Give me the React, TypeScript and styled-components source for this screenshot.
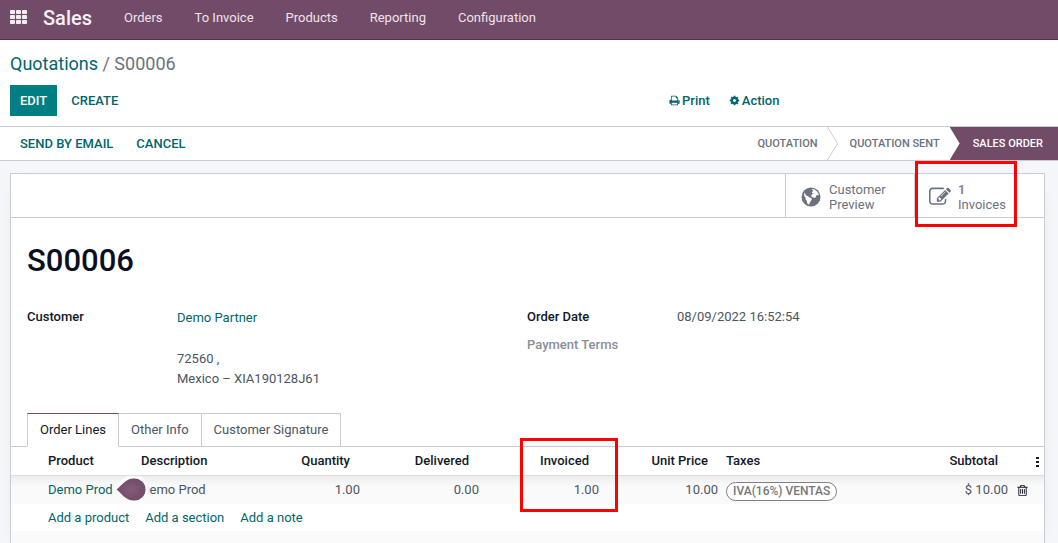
import React from "react";
import styled, { createGlobalStyle, css } from "styled-components";

const color = {
  brand: "#714b67",
  teal: "#017e84",
  tealText: "#01666b",
  line: "#c9ccd2",
  ink: "#111827",
  text: "#4b5563",
  muted: "#6b7280",
};

const GlobalStyle = createGlobalStyle`
  *, *::before, *::after { box-sizing: border-box; }
  body {
    margin: 0;
    background: #fff;
    color: ${color.text};
    font-family: Roboto, "Liberation Sans", sans-serif;
    font-size: 13px;
    line-height: 20px;
    overflow: hidden;
  }
  button { font: inherit; color: inherit; background: none; border: 0; padding: 0; cursor: pointer; }
  a { color: ${color.tealText}; text-decoration: none; }
  h1, p, dl, dd, dt, ol { margin: 0; padding: 0; }
`;

const Page = styled.div`
  display: flex;
  flex-direction: column;
  height: 100vh;
`;

const Navbar = styled.nav`
  display: flex;
  align-items: center;
  height: 40px;
  padding: 0 10px 4px;
  background: ${color.brand};
  border-bottom: 1px solid #4f3448;
  color: #f0e9ee;
  flex: none;
`;

const AppsButton = styled.button`
  display: flex;
  margin-right: 16px;
  padding-bottom: 2px;
`;

const Brand = styled.a`
  color: #f5f0f4;
  font-size: 20px;
  font-weight: 500;
  margin-right: 16px;
`;

const NavLink = styled.a`
  color: #eee4eb;
  padding: 0 16px;
`;

const ControlPanel = styled.header`
  display: flex;
  flex-direction: column;
  gap: 9px;
  padding: 12px 10px 10px;
  border-bottom: 1px solid ${color.line};
  flex: none;
`;

const Breadcrumb = styled.div`
  font-size: 18px;
  line-height: 24px;
  color: ${color.muted};
`;

const Actions = styled.div`
  display: grid;
  grid-template-columns: 659px 1fr;
  align-items: center;
`;

const ButtonGroup = styled.div<{ $gap?: number }>`
  display: flex;
  align-items: center;
  gap: ${(p) => p.$gap ?? 0}px;
`;

const Button = styled.button<{ $primary?: boolean }>`
  height: 31px;
  padding: 0 ${(p) => (p.$primary ? 10 : 14)}px;
  font-weight: 500;
  text-transform: uppercase;
  color: ${(p) => (p.$primary ? "#fff" : color.tealText)};
  background: ${(p) => (p.$primary ? color.teal : "transparent")};
`;

const MenuButton = styled.button`
  display: flex;
  align-items: center;
  gap: 2px;
  font-weight: 500;
  color: ${color.tealText};
`;

const StatusBar = styled.div`
  display: flex;
  justify-content: space-between;
  height: 34px;
  padding-left: 20px;
  border-bottom: 1px solid ${color.line};
  flex: none;
`;

const TextButton = styled.button`
  font-weight: 500;
  text-transform: uppercase;
  color: ${color.tealText};
`;

const Steps = styled.ol`
  display: flex;
  list-style: none;
  font-size: 11px;
  font-weight: 500;
  text-transform: uppercase;
  color: ${color.muted};
`;

const Step = styled.li<{ $active?: boolean }>`
  display: flex;
  align-items: center;
  ${(p) =>
    p.$active
      ? css`
          padding: 0 15px 0 23px;
          margin-left: 10px;
          background: ${color.brand};
          color: #fff;
          clip-path: polygon(0 0, 100% 0, 100% 100%, 0 100%, 10px 50%);
        `
      : css`
          padding-left: 12px;
        `}
`;

const StepArrow = styled.svg`
  margin-left: 9px;
  align-self: stretch;
  width: 11px;
  height: 33px;
`;

const Main = styled.main`
  display: flex;
  flex: 1;
  min-height: 0;
  padding: 12px 13px 0 10px;
  background: #f4f6fa;
`;

const Sheet = styled.section`
  flex: 1;
  min-width: 0;
  background: #fff;
  border: 1px solid ${color.line};
  border-bottom: 0;
  box-shadow: 0 5px 20px -15px rgba(0, 0, 0, 0.3);
`;

const StatButtons = styled.div`
  display: flex;
  justify-content: flex-end;
  height: 44px;
  border-bottom: 1px solid ${color.line};
`;

const StatButton = styled.button`
  position: relative;
  display: flex;
  align-items: center;
  gap: 7px;
  width: 130px;
  padding: 2px 13px 0 14px;
  border-left: 1px solid ${color.line};
  color: ${color.muted};
  text-align: left;
  line-height: 15px;

  &:first-child { width: 129px; }
`;

const StatIcon = styled.span`
  display: flex;
  justify-content: center;
  width: 22px;
`;

const StatValue = styled.span`
  display: block;
  font-weight: 500;
  color: #8f6f87;
`;

const Highlight = styled.span<{ $x: number; $y: number; $w: number; $h: number }>`
  position: absolute;
  z-index: 2;
  left: ${(p) => p.$x}px;
  top: ${(p) => p.$y}px;
  width: ${(p) => p.$w}px;
  height: ${(p) => p.$h}px;
  border: 3px solid #f00;
  pointer-events: none;
`;

const Title = styled.h1`
  padding: 23px 16px 0;
  font-size: 31px;
  line-height: 40px;
  font-weight: 500;
  color: #0b1020;
`;

const Fields = styled.div`
  display: grid;
  grid-template-columns: 500px 1fr;
  height: 106px;
  margin: 26px 16px 0;
`;

const FieldList = styled.dl`
  display: grid;
  grid-template-columns: 150px 1fr;
  align-content: start;
  row-gap: 8px;
`;

const Label = styled.dt<{ $empty?: boolean }>`
  font-weight: 500;
  color: ${(p) => (p.$empty ? "#8a8f98" : color.ink)};
`;

const Partner = styled.dd`
  padding-top: 1px;
`;

const Address = styled.p`
  padding-top: 21px;
`;

const Tabs = styled.div`
  display: flex;
  height: 34px;
  padding-left: 16px;
  box-shadow: inset 0 -1px ${color.line};
`;

const Tab = styled.button<{ $active?: boolean }>`
  padding: 0 12px;
  border: 1px solid ${color.line};
  border-left-width: ${(p) => (p.$active ? 1 : 0)}px;
  color: ${color.text};
  ${(p) =>
    p.$active &&
    css`
      color: ${color.ink};
      background: #fff;
      border-top-color: ${color.brand};
      border-bottom-color: #fff;
    `}
`;

const Table = styled.table`
  width: 100%;
  table-layout: fixed;
  border-collapse: separate;
  border-spacing: 0;
`;

const Col = styled.col<{ $w?: number }>`
  width: ${(p) => (p.$w ? `${p.$w}px` : "auto")};
`;

const HeadCell = styled.th<{ $right?: boolean }>`
  position: relative;
  height: 29px;
  padding: 0 ${(p) => (p.$right ? 14 : 4)}px 0 4px;
  border-bottom: 1px solid #dcdde1;
  font-weight: 500;
  color: ${color.ink};
  text-align: ${(p) => (p.$right ? "right" : "left")};
`;

const Row = styled.tr<{ $kind: "line" | "add" | "blank" }>`
  height: ${(p) => (p.$kind === "line" ? 28 : 27)}px;
  background: ${(p) =>
    p.$kind === "line"
      ? "linear-gradient(#ececec, #fafafa 10px)"
      : p.$kind === "blank"
        ? "#fafafa"
        : "#fff"};
`;

const Cell = styled.td<{ $right?: boolean }>`
  position: relative;
  padding: 0 4px;
  text-align: ${(p) => (p.$right ? "right" : "left")};
`;

const AddLinks = styled.div`
  display: flex;
  gap: 16px;
`;

const TaxRow = styled.div`
  display: flex;
  align-items: center;
`;

const Tag = styled.span`
  padding: 0 6px;
  border: 1px solid #808080;
  border-radius: 10px;
  background: #fff;
  color: #777;
  font-size: 12px;
  font-weight: 500;
  line-height: 17px;
  margin-top: 2px;
`;

const Drop = styled.svg`
  position: absolute;
  z-index: 1;
  left: -23px;
  top: 0;
`;

const RowIcon = styled.button<{ $end?: boolean }>`
  display: flex;
  margin-left: ${(p) => (p.$end ? "auto" : "0")};
  color: ${color.ink};
`;

const glyphs = {
  print:
    "M448 1536h896v-256h-896v256zm0-640h896v-384h-160q-40 0-68-28t-28-68v-160h-640v640zm1152 64q0-26-19-45t-45-19-45 19-19 45 19 45 45 19 45-19 19-45zm128 0v416q0 13-9.5 22.5t-22.5 9.5h-224v160q0 40-28 68t-68 28h-960q-40 0-68-28t-28-68v-160h-224q-13 0-22.5-9.5t-9.5-22.5v-416q0-79 56.5-135.5t135.5-56.5h64v-544q0-40 28-68t68-28h672q40 0 88 20t76 48l152 152q28 28 48 76t20 88v256h64q79 0 135.5 56.5t56.5 135.5z",
  cog: "M1152 896q0-106-75-181t-181-75-181 75-75 181 75 181 181 75 181-75 75-181zm512-109v222q0 12-8 23t-20 13l-185 28q-19 54-39 91 35 50 107 138 10 12 10 25t-9 23q-27 37-99 108t-94 71q-12 0-26-9l-138-108q-44 23-91 38-16 136-29 186-7 28-36 28h-222q-14 0-24.5-8.5t-11.5-21.5l-28-184q-49-16-90-37l-141 107q-10 9-25 9-14 0-25-11-126-114-165-168-7-10-7-23 0-12 8-23 15-21 51-66.5t54-70.5q-27-50-41-99l-183-27q-13-2-21-12.5t-8-23.5v-222q0-12 8-23t19-13l186-28q14-46 39-92-40-57-107-138-10-12-10-24 0-10 9-23 26-36 98.5-107.5t94.5-71.5q13 0 26 10l138 107q44-23 91-38 16-136 29-186 7-28 36-28h222q14 0 24.5 8.5t11.5 21.5l28 184q49 16 90 37l142-107q9-9 24-9 13 0 25 10 129 119 165 170 7 8 7 22 0 12-8 23-15 21-51 66.5t-54 70.5q26 50 41 98l183 28q13 2 21 12.5t8 23.5z",
  edit: "M888 1184l116-116-152-152-116 116v56h96v96h56zm440-720q-16-16-33 1l-350 350q-17 17-1 33t33-1l350-350q17-17 1-33zm80 594v190q0 119-84.5 203.5t-203.5 84.5h-832q-119 0-203.5-84.5t-84.5-203.5v-832q0-119 84.5-203.5t203.5-84.5h832q63 0 117 25 15 7 18 23 3 17-9 29l-49 49q-14 14-32 8-23-6-45-6h-832q-66 0-113 47t-47 113v832q0 66 47 113t113 47h832q66 0 113-47t47-113v-126q0-13 9-22l64-64q15-15 35-7t20 29zm-96-738l288 288-672 672h-288v-288zm444 132l-92 92-288-288 92-92q28-28 68-28t68 28l152 152q28 28 28 68t-28 68z",
  trash:
    "M704 736v576q0 14-9 23t-23 9h-64q-14 0-23-9t-9-23v-576q0-14 9-23t23-9h64q14 0 23 9t9 23zm256 0v576q0 14-9 23t-23 9h-64q-14 0-23-9t-9-23v-576q0-14 9-23t23-9h64q14 0 23 9t9 23zm256 0v576q0 14-9 23t-23 9h-64q-14 0-23-9t-9-23v-576q0-14 9-23t23-9h64q14 0 23 9t9 23zm128 724v-948h-896v948q0 22 7 40.5t14.5 27 10.5 8.5h832q3 0 10.5-8.5t14.5-27 7-40.5zm-672-1076h448l-48-117q-7-9-17-11h-317q-10 2-17 11zm928 32v64q0 14-9 23t-23 9h-96v948q0 83-47 143.5t-113 60.5h-832q-66 0-113-58.5t-47-141.5v-952h-96q-14 0-23-9t-9-23v-64q0-14 9-23t23-9h309l70-167q15-37 54-63t79-26h320q40 0 79 26t54 63l70 167h309q14 0 23 9t9 23z",
};

function Glyph({ name, size }: { name: keyof typeof glyphs; size: number }) {
  return (
    <svg width={size} height={size} viewBox="0 0 1792 1792" fill="currentColor" aria-hidden="true">
      <path d={glyphs[name]} />
    </svg>
  );
}

function AppsIcon() {
  return (
    <svg width="17" height="14" viewBox="0 0 17 14" fill="#f3edf1" aria-hidden="true">
      {[0, 5, 10].map((y) =>
        [0, 6, 12].map((x) => <rect key={`${x}-${y}`} x={x} y={y} width="5" height="4" rx="0.8" />),
      )}
    </svg>
  );
}

function GlobeIcon() {
  return (
    <svg width="20" height="20" viewBox="0 0 20 20" aria-hidden="true">
      <circle cx="10" cy="10" r="9.5" fill={color.muted} />
      <path
        fill="#fff"
        d="M11.2 2l2.4.6 2.2 1.6 1.5 2.1.7 2.2-.9-.5-1-.1-.9.9-.3 1.3-1.1.9-1.2-.5-1.4-.3-.9-1 .1-1.3 1.1-.9 1.1-.4-.5-.7-1 .3-.3-.9 1-1.1.8-.5-.9-.4-.7-.6zM3.2 6l1.1.5.4 1.4 1.1.9 1.4.5.9 1 1.5.4 1.2 1.1-.2 1.3-1 .8-.4 1.3-.9 1 .1 1.5-1.3-.5-1-1.3-.2-1.8-1-1.1-.5-1.4.3-1-1-.9-.6-1.6z"
      />
    </svg>
  );
}

export default function App() {
  return (
    <Page>
      <GlobalStyle />
      <Navbar>
        <AppsButton aria-label="Apps">
          <AppsIcon />
        </AppsButton>
        <Brand href="#">Sales</Brand>
        {["Orders", "To Invoice", "Products", "Reporting", "Configuration"].map((item) => (
          <NavLink key={item} href="#">
            {item}
          </NavLink>
        ))}
      </Navbar>

      <ControlPanel>
        <Breadcrumb>
          <a href="#">Quotations</a> / S00006
        </Breadcrumb>
        <Actions>
          <ButtonGroup>
            <Button $primary>Edit</Button>
            <Button>Create</Button>
          </ButtonGroup>
          <ButtonGroup $gap={19}>
            <MenuButton>
              <Glyph name="print" size={11} />
              Print
            </MenuButton>
            <MenuButton>
              <Glyph name="cog" size={11} />
              Action
            </MenuButton>
          </ButtonGroup>
        </Actions>
      </ControlPanel>

      <StatusBar>
        <ButtonGroup $gap={23}>
          <TextButton>Send by Email</TextButton>
          <TextButton>Cancel</TextButton>
        </ButtonGroup>
        <Steps>
          <Step>
            Quotation
            <StepArrow viewBox="0 0 11 33" aria-hidden="true">
              <path d="M0.5 0L10.5 16.5L0.5 33" fill="none" stroke="#c9ccd2" />
            </StepArrow>
          </Step>
          <Step>Quotation Sent</Step>
          <Step $active>Sales Order</Step>
        </Steps>
      </StatusBar>

      <Main>
        <Sheet>
          <StatButtons>
            <StatButton>
              <StatIcon>
                <GlobeIcon />
              </StatIcon>
              <span>
                Customer
                <br />
                Preview
              </span>
            </StatButton>
            <StatButton>
              <StatIcon>
                <Glyph name="edit" size={22} />
              </StatIcon>
              <span>
                <StatValue>1</StatValue>
                Invoices
              </span>
              <Highlight $x={0} $y={-13} $w={102} $h={66} />
            </StatButton>
          </StatButtons>

          <Title>S00006</Title>

          <Fields>
            <FieldList>
              <Label>Customer</Label>
              <Partner>
                <a href="#">Demo Partner</a>
                <Address>
                  72560 ,<br />
                  Mexico – XIA190128J61
                </Address>
              </Partner>
            </FieldList>
            <FieldList>
              <Label>Order Date</Label>
              <dd>08/09/2022 16:52:54</dd>
              <Label $empty>Payment Terms</Label>
              <dd />
            </FieldList>
          </Fields>

          <Tabs role="tablist">
            <Tab role="tab" aria-selected="true" $active>
              Order Lines
            </Tab>
            <Tab role="tab" aria-selected="false">
              Other Info
            </Tab>
            <Tab role="tab" aria-selected="false">
              Customer Signature
            </Tab>
          </Tabs>

          <Table>
            <colgroup>
              <Col $w={33} />
              <Col $w={93} />
              <Col $w={109} />
              <Col $w={118} />
              <Col $w={119} />
              <Col $w={120} />
              <Col $w={119} />
              <Col />
              <Col $w={90} />
              <Col $w={32} />
            </colgroup>
            <thead>
              <tr>
                <HeadCell />
                <HeadCell>Product</HeadCell>
                <HeadCell>Description</HeadCell>
                <HeadCell $right>Quantity</HeadCell>
                <HeadCell $right>Delivered</HeadCell>
                <HeadCell $right>
                  Invoiced
                  <Highlight $x={37} $y={-9} $w={98} $h={74} />
                </HeadCell>
                <HeadCell $right>Unit Price</HeadCell>
                <HeadCell>Taxes</HeadCell>
                <HeadCell $right>Subtotal</HeadCell>
                <HeadCell>
                  <RowIcon $end aria-label="Optional columns">
                    <svg width="5" height="11" viewBox="0 0 5 11" fill="currentColor" aria-hidden="true">
                      <rect x="1" y="1" width="3" height="2" />
                      <rect x="1" y="5" width="3" height="2" />
                      <rect x="1" y="9" width="3" height="2" />
                    </svg>
                  </RowIcon>
                </HeadCell>
              </tr>
            </thead>
            <tbody>
              <Row $kind="line">
                <Cell />
                <Cell>
                  <a href="#">Demo Prod</a>
                </Cell>
                <Cell>
                  Demo Prod
                  <Drop width="36" height="27" viewBox="0 0 36 27" aria-hidden="true">
                    <defs>
                      <radialGradient id="drop">
                        <stop offset="0" stopColor="#875a7b" />
                        <stop offset="1" stopColor="#714b67" />
                      </radialGradient>
                    </defs>
                    <path
                      d="M2.5 13.5C7 10.5 11 2.5 20 2.5a11 11 0 0 1 11.5 11a11 11 0 0 1-11.5 11C11 24.5 7 16.5 2.5 13.5z"
                      fill="url(#drop)"
                      stroke="#fbfbfb"
                      strokeWidth="7"
                      paintOrder="stroke"
                    />
                  </Drop>
                </Cell>
                <Cell $right>1.00</Cell>
                <Cell $right>0.00</Cell>
                <Cell $right>1.00</Cell>
                <Cell $right>10.00</Cell>
                <Cell>
                  <TaxRow>
                    <Tag>IVA(16%) VENTAS</Tag>
                  </TaxRow>
                </Cell>
                <Cell $right>$ 10.00</Cell>
                <Cell>
                  <RowIcon aria-label="Delete line">
                    <Glyph name="trash" size={13} />
                  </RowIcon>
                </Cell>
              </Row>
              <Row $kind="add">
                <Cell />
                <Cell colSpan={9}>
                  <AddLinks>
                    <a href="#">Add a product</a>
                    <a href="#">Add a section</a>
                    <a href="#">Add a note</a>
                  </AddLinks>
                </Cell>
              </Row>
              <Row $kind="blank">
                <Cell colSpan={10} />
              </Row>
            </tbody>
          </Table>
        </Sheet>
      </Main>
    </Page>
  );
}
